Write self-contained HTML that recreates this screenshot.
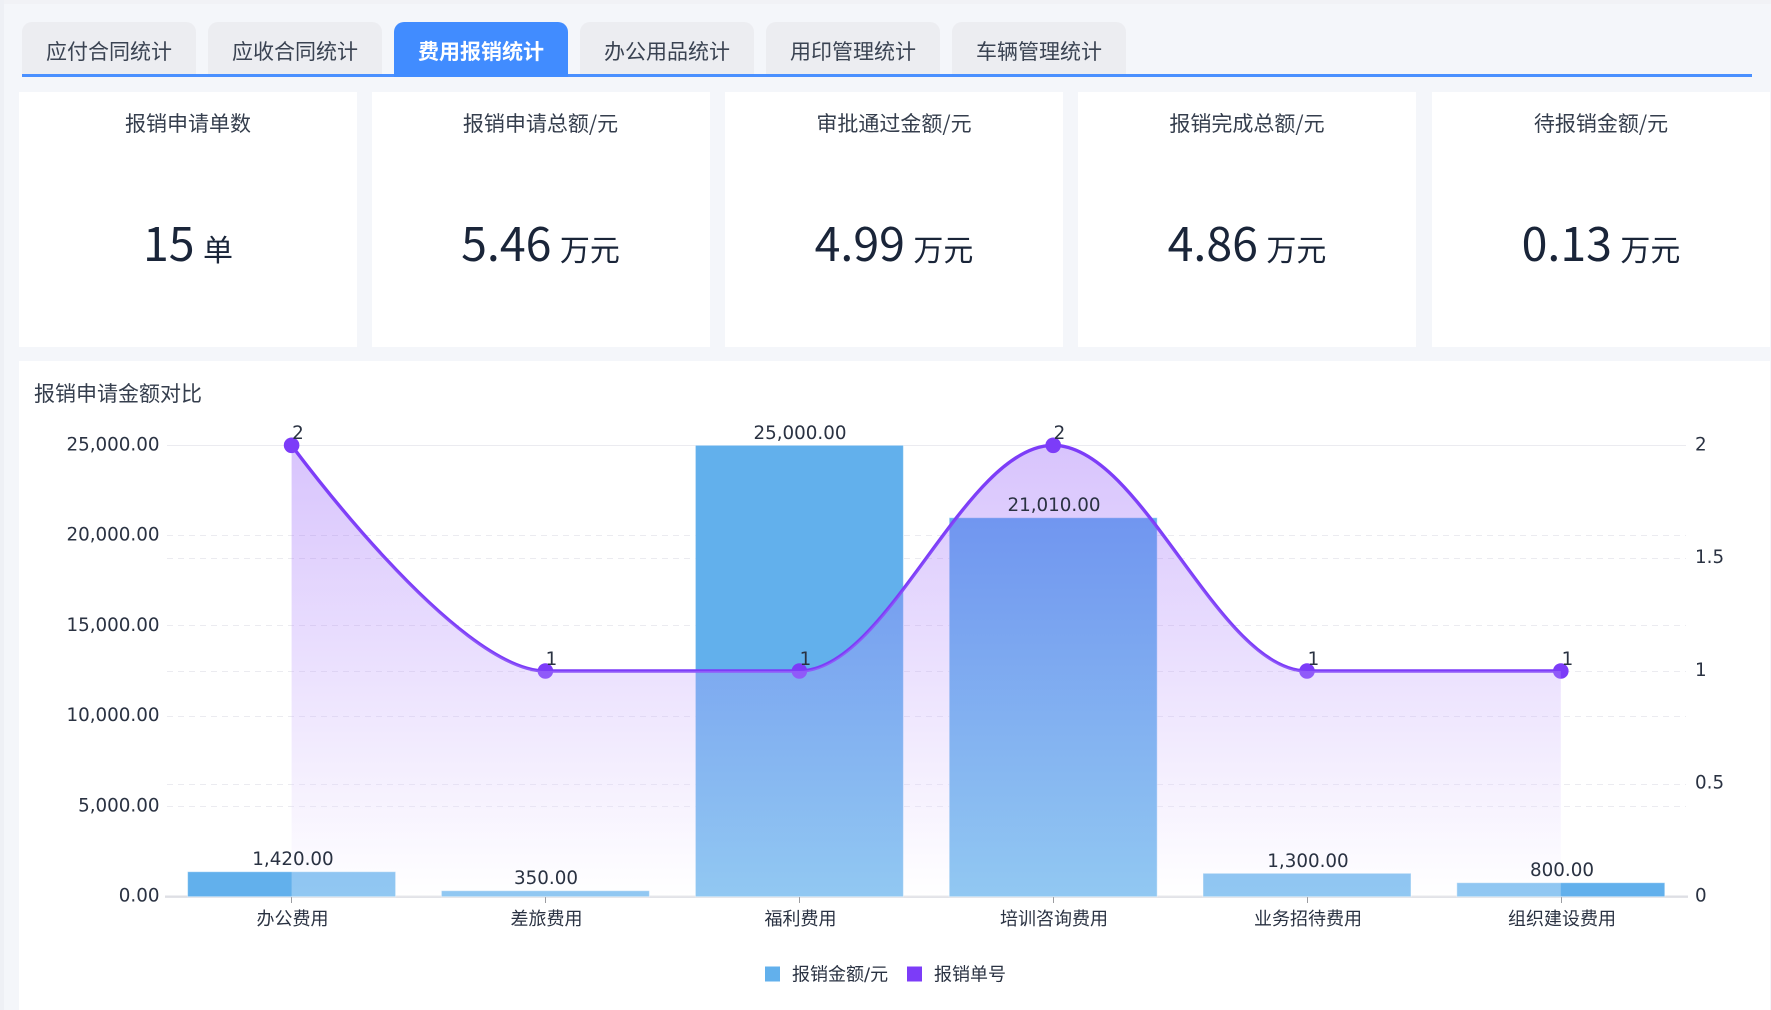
<!DOCTYPE html>
<html lang="zh">
<head>
<meta charset="utf-8">
<title>费用报销统计</title>
<style>
html,body{margin:0;padding:0;width:1771px;height:1010px;overflow:hidden;background:#f4f6fa;font-family:"Liberation Sans","Noto Sans CJK SC",sans-serif;}
#w{position:absolute;left:0;top:0;width:1771px;height:1010px;filter:blur(.35px);}
.abs{position:absolute}
.tab{position:absolute;top:22px;height:55px;width:174px;background:#ecedf1;border-radius:10px 10px 0 0;color:#3a4352;font-size:21px;line-height:58px;text-align:center;font-family:"Noto Sans CJK SC",sans-serif;}
.tab.on{background:#418cff;color:#fff;font-weight:700;}
.card{position:absolute;top:92px;height:255px;background:#fff;text-align:center;font-family:"Noto Sans CJK SC",sans-serif;}
.card .t{position:absolute;left:0;right:0;top:14px;font-size:21px;line-height:34px;color:#353e4d;}
.card .v{position:absolute;left:0;right:0;top:117px;line-height:66px;font-size:46.5px;color:#1a2539;white-space:nowrap;}
.card .v span{font-size:30px;margin-left:-2px;}
svg text{font-family:"DejaVu Sans","Noto Sans CJK SC",sans-serif;font-size:18.3px;fill:#2a3242;}
svg text.c{font-size:18px;}
</style>
</head>
<body>
<div id="w">
<div class="abs" style="left:0;top:0;width:1771px;height:4px;background:#f1f2f6"></div>
<div class="abs" style="left:0;top:0;width:4px;height:1010px;background:#eef0f5"></div>

<div class="tab" style="left:22px">应付合同统计</div>
<div class="tab" style="left:208px">应收合同统计</div>
<div class="tab on" style="left:394px">费用报销统计</div>
<div class="tab" style="left:580px">办公用品统计</div>
<div class="tab" style="left:766px">用印管理统计</div>
<div class="tab" style="left:952px">车辆管理统计</div>
<div class="abs" style="left:22px;top:73.5px;width:1730px;height:3px;background:#4a90ff"></div>
<div class="abs" style="left:394px;top:70px;width:174px;height:7px;background:#418cff"></div>

<div class="card" style="left:19px;width:338px"><div class="t">报销申请单数</div><div class="v">15 <span>单</span></div></div>
<div class="card" style="left:371.5px;width:338px"><div class="t">报销申请总额/元</div><div class="v">5.46 <span>万元</span></div></div>
<div class="card" style="left:725px;width:338px"><div class="t">审批通过金额/元</div><div class="v">4.99 <span>万元</span></div></div>
<div class="card" style="left:1078px;width:338px"><div class="t">报销完成总额/元</div><div class="v">4.86 <span>万元</span></div></div>
<div class="card" style="left:1432px;width:338px"><div class="t">待报销金额/元</div><div class="v">0.13 <span>万元</span></div></div>

<div class="abs" style="left:19px;top:361px;width:1751px;height:649px;background:#fff"></div>
<div class="abs" style="left:34px;top:376px;font-size:21px;line-height:34px;color:#353e4d;font-family:'Noto Sans CJK SC',sans-serif;white-space:nowrap">报销申请金额对比</div>

<svg class="abs" style="left:0;top:0" width="1771" height="1010" viewBox="0 0 1771 1010" xmlns="http://www.w3.org/2000/svg">
<defs>
<linearGradient id="ar" gradientUnits="userSpaceOnUse" x1="0" y1="445.3" x2="0" y2="896.7">
<stop offset="0" stop-color="#7d3af7"/>
<stop offset="1" stop-color="#ffffff"/>
</linearGradient>
</defs>

<!-- grid -->
<g stroke="#ebebf0" stroke-width="1" fill="none">
<line x1="167" x2="1686" y1="445.5" y2="445.5"/>
<g stroke-dasharray="6 5">
<line x1="167" x2="1686" y1="535.5" y2="535.5"/>
<line x1="167" x2="1686" y1="558.5" y2="558.5"/>
<line x1="167" x2="1686" y1="625.5" y2="625.5"/>
<line x1="167" x2="1686" y1="671.5" y2="671.5"/>
<line x1="167" x2="1686" y1="716.5" y2="716.5"/>
<line x1="167" x2="1686" y1="784.5" y2="784.5"/>
<line x1="167" x2="1686" y1="806.5" y2="806.5"/>
</g>
</g>

<!-- axis -->
<line x1="165" x2="1688" y1="896.7" y2="896.7" stroke="#dedfe4" stroke-width="2.4"/>
<g stroke="#9b9ca0" stroke-width="1">
<line x1="291.5" x2="291.5" y1="897" y2="903"/>
<line x1="545.5" x2="545.5" y1="897" y2="903"/>
<line x1="799.5" x2="799.5" y1="897" y2="903"/>
<line x1="1053.5" x2="1053.5" y1="897" y2="903"/>
<line x1="1307.5" x2="1307.5" y1="897" y2="903"/>
<line x1="1561.5" x2="1561.5" y1="897" y2="903"/>
</g>

<!-- bars -->
<g fill="#62b0ec" stroke="#ffffff" stroke-opacity=".45" stroke-width="1">
<rect x="187.6" y="871.7" width="208" height="25"/>
<rect x="441.4" y="890.7" width="208" height="6"/>
<rect x="695.4" y="445.3" width="208" height="451.4"/>
<rect x="949.2" y="517.7" width="208" height="379"/>
<rect x="1203" y="873.3" width="208" height="23.4"/>
<rect x="1456.8" y="882.7" width="208" height="14"/>
</g>

<!-- line and symbols -->
<path d="M291.6,445.3 C291.6,445.3 456.6,671 545.4,671 C634.2,671 710.6,671 799.4,671 C888.2,671 964.4,445.3 1053.2,445.3 C1142,445.3 1218.2,671 1307,671 C1395.8,671 1472,671 1560.8,671" fill="none" stroke="#7c3cf8" stroke-width="3.4"/>
<g fill="#7c3cf8">
<circle cx="291.6" cy="445.3" r="7.8"/>
<circle cx="545.4" cy="671" r="7.8"/>
<circle cx="799.4" cy="671" r="7.8"/>
<circle cx="1053.2" cy="445.3" r="7.8"/>
<circle cx="1307" cy="671" r="7.8"/>
<circle cx="1560.8" cy="671" r="7.8"/>
</g>

<!-- area, painted over the line -->
<path d="M291.6,445.3 C291.6,445.3 456.6,671 545.4,671 C634.2,671 710.6,671 799.4,671 C888.2,671 964.4,445.3 1053.2,445.3 C1142,445.3 1218.2,671 1307,671 C1395.8,671 1472,671 1560.8,671 L1560.8,896.7 L291.6,896.7 Z" fill="url(#ar)" fill-opacity=".3"/>

<!-- left axis labels -->
<g text-anchor="end">
<text x="159.5" y="450.5">25,000.00</text>
<text x="159.5" y="540.5">20,000.00</text>
<text x="159.5" y="631">15,000.00</text>
<text x="159.5" y="721">10,000.00</text>
<text x="159.5" y="811.5">5,000.00</text>
<text x="159.5" y="901.5">0.00</text>
</g>
<!-- right axis labels -->
<text x="1695" y="450.5">2</text>
<text x="1695" y="563">1.5</text>
<text x="1695" y="676">1</text>
<text x="1695" y="788.5">0.5</text>
<text x="1695" y="901.5">0</text>

<!-- x labels -->
<g text-anchor="middle">
<text class="c" x="292.5" y="925">办公费用</text>
<text class="c" x="546.5" y="925">差旅费用</text>
<text class="c" x="800.5" y="925">福利费用</text>
<text class="c" x="1054" y="925">培训咨询费用</text>
<text class="c" x="1308" y="925">业务招待费用</text>
<text class="c" x="1562" y="925">组织建设费用</text>
</g>

<!-- bar value labels -->
<g text-anchor="middle">
<text x="800" y="439">25,000.00</text>
<text x="1054" y="511">21,010.00</text>
<text x="293" y="865">1,420.00</text>
<text x="546" y="884">350.00</text>
<text x="1308" y="867">1,300.00</text>
<text x="1562" y="876">800.00</text>
<text x="298" y="439">2</text>
<text x="551.5" y="665">1</text>
<text x="805.5" y="665">1</text>
<text x="1059.5" y="439">2</text>
<text x="1313.5" y="665">1</text>
<text x="1567.5" y="665">1</text>
</g>

<!-- legend -->
<rect x="765" y="966.5" width="15" height="15" fill="#62b0ec"/>
<text class="c" x="792" y="980.5">报销金额/元</text>
<rect x="907" y="966.5" width="15" height="15" fill="#7c3cf8"/>
<text class="c" x="934" y="980.5">报销单号</text>
</svg>
</div>
</body>
</html>
